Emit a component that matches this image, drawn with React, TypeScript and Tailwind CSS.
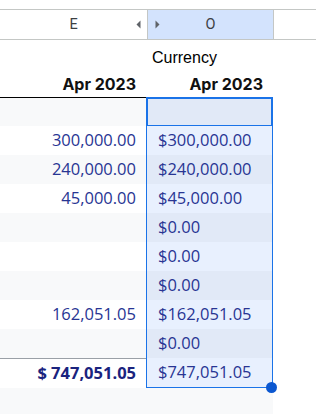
import React from "react";

type Row = { e: string; o: string; total?: boolean };

const rows: Row[] = [
  { e: "", o: "" },
  { e: "300,000.00", o: "$300,000.00" },
  { e: "240,000.00", o: "$240,000.00" },
  { e: "45,000.00", o: "$45,000.00" },
  { e: "", o: "$0.00" },
  { e: "", o: "$0.00" },
  { e: "", o: "$0.00" },
  { e: "162,051.05", o: "$162,051.05" },
  { e: "", o: "$0.00" },
  { e: "$ 747,051.05", o: "$747,051.05", total: true },
];

const valFont = { fontFamily: '"Open Sans", "Noto Sans", sans-serif' };

export default function App() {
  return (
    <div className="w-[316px] h-[414px] bg-white overflow-hidden">
      <div className="h-[9px]" />
      {/* Column header */}
      <div
        className="flex h-[31px] border-y border-[#c4c7c5] text-[14.5px] text-[#3c4043]"
        style={{ fontFamily: "Roboto, Arial, sans-serif" }}
      >
        <div className="relative w-[147px] flex items-center justify-center">
          E
          <svg
            className="absolute right-[6px] top-[10px]"
            width="5"
            height="9"
            viewBox="0 0 5 9"
          >
            <path d="M4.5 0.5 L0.5 4.5 L4.5 8.5 Z" fill="#5f6368" />
          </svg>
        </div>
        <div className="relative w-[127px] flex items-center justify-center bg-[#d3e3fd] border-x border-[#c4c7c5]">
          O
          <svg
            className="absolute left-[7px] top-[10px]"
            width="5"
            height="9"
            viewBox="0 0 5 9"
          >
            <path d="M0.5 0.5 L4.5 4.5 L0.5 8.5 Z" fill="#5f6368" />
          </svg>
        </div>
        <div className="flex-1" />
      </div>

      {/* Currency row */}
      <div className="flex h-[29px]">
        <div className="w-[147px]" />
        <div
          className="w-[127px] pl-[5px] pt-[9px] text-[16px] leading-[18px] text-black"
          style={{ fontFamily: '"Liberation Sans", Arial, sans-serif' }}
        >
          Currency
        </div>
      </div>

      {/* Apr 2023 row */}
      <div
        className="flex h-[28px] text-[16px] leading-[20px] font-bold text-[#111]"
        style={{ fontFamily: "Inter, Roboto, sans-serif" }}
      >
        <div className="w-[147px] pt-[5px] pr-[11px] text-right">Apr 2023</div>
        <div className="w-[127px] pt-[5px] pr-[11px] text-right">Apr 2023</div>
      </div>

      {/* Data rows */}
      <div className="flex">
        <div className="w-[146px] border-t border-black" style={valFont}>
          {rows.map((r, i) => (
            <div
              key={i}
              className={`flex items-center justify-end pr-[10px] text-[16.5px] ${
                i === 0 ? "h-[28px]" : "h-[29px]"
              } ${i % 2 === 0 ? "bg-[#f8f9fa]" : "bg-white"} ${
                r.total
                  ? "border-t border-[#9aa0a6] font-bold text-[#1a237e]"
                  : "text-[#283593]"
              }`}
            >
              {r.e}
            </div>
          ))}
        </div>
        <div className="relative w-[127px] border border-[#1a73e8]" style={valFont}>
          {rows.map((r, i) => (
            <div
              key={i}
              className={`flex items-center pl-[11px] text-[16.5px] text-[#283593] ${
                i === 0
                  ? "h-[28px] shadow-[inset_0_0_0_1px_#1a73e8]"
                  : "h-[29px]"
              } ${i % 2 === 0 ? "bg-[#e1e9f7]" : "bg-[#e8f0fe]"}`}
            >
              {r.o}
            </div>
          ))}
          <div className="absolute -right-[5px] -bottom-[6px] w-[11px] h-[11px] rounded-full bg-[#0b57d0] z-10" />
        </div>
        <div className="flex-1" />
      </div>
      <div className="w-[273px] h-[40px] bg-[#f8f9fa]" />
    </div>
  );
}
